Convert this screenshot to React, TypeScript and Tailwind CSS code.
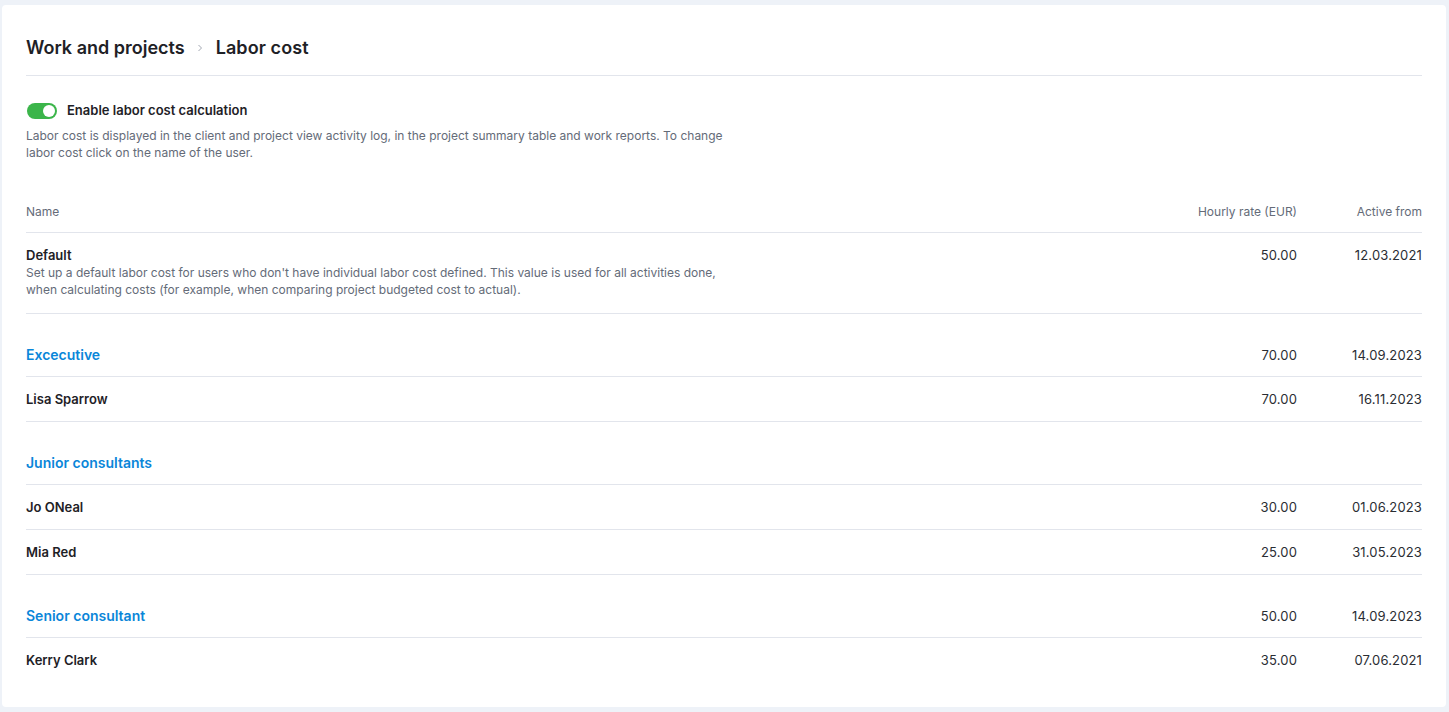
const groups = [
  {
    name: 'Excecutive',
    rate: '70.00',
    from: '14.09.2023',
    people: [{ name: 'Lisa Sparrow', rate: '70.00', from: '16.11.2023' }],
  },
  {
    name: 'Junior consultants',
    rate: '',
    from: '',
    people: [
      { name: 'Jo ONeal', rate: '30.00', from: '01.06.2023' },
      { name: 'Mia Red', rate: '25.00', from: '31.05.2023' },
    ],
  },
  {
    name: 'Senior consultant',
    rate: '50.00',
    from: '14.09.2023',
    people: [{ name: 'Kerry Clark', rate: '35.00', from: '07.06.2021' }],
  },
];

function Toggle() {
  return (
    <div className="relative h-4 w-[30px] rounded-full bg-[#3bb54a]">
      <div className="absolute right-[2px] top-[2px] h-3 w-3 rounded-full bg-white" />
    </div>
  );
}

function Cells({ rate, from }: { rate: string; from: string }) {
  return (
    <>
      <div className="w-[200px] text-right text-[13px] tracking-[0.15px] text-[#2a2d33]">{rate}</div>
      <div className="w-[125px] text-right text-[13px] tracking-[0.15px] text-[#2a2d33]">{from}</div>
    </>
  );
}

export default function App() {
  return (
    <div
      className="min-h-[712px] bg-[#eef2f8] pl-[2px] pr-[3px] pt-[5px] pb-[6px]"
      style={{ fontFamily: 'Inter, "Noto Sans", sans-serif' }}
    >
      <div className="rounded-[4px] bg-white px-6 pt-[31px] pb-6">
        {/* Breadcrumb */}
        <div className="flex items-center border-b border-[#e2e5ec] pb-[15px] leading-6">
          <span className="text-[18px] font-semibold text-[#1e2126]">Work and projects</span>
          <svg className="ml-[12px] mr-[13px] h-[8px] w-[6px]" viewBox="0 0 6 8" fill="none">
            <path d="M1.5 1l3 3-3 3" stroke="#a3a8b3" strokeWidth="1" />
          </svg>
          <span className="text-[18px] font-semibold tracking-[0.1px] text-[#1e2126]">Labor cost</span>
        </div>

        {/* Toggle */}
        <div className="mt-[25px] flex h-5 items-center gap-[10px] pl-[1px]">
          <Toggle />
          <span className="text-[13px] font-semibold text-[#1e2126]">Enable labor cost calculation</span>
        </div>
        <p className="mt-[6px] max-w-[720px] text-[12px] leading-[17px] text-[#646b78]">
          Labor cost is displayed in the client and project view activity log, in the project summary table and work reports. To change
          labor cost click on the name of the user.
        </p>

        {/* Table header */}
        <div className="mt-[43px] flex items-center border-b border-[#e2e5ec] pb-[12px] leading-4">
          <div className="flex-1 text-[12px] text-[#646b78]">Name</div>
          <div className="w-[200px] text-right text-[12px] text-[#646b78]">Hourly rate (EUR)</div>
          <div className="w-[125px] text-right text-[12px] text-[#646b78]">Active from</div>
        </div>

        {/* Default row */}
        <div className="flex items-start border-b border-[#e2e5ec] pt-[14px] pb-[15px]">
          <div className="flex-1">
            <div className="text-[13px] font-semibold leading-[17px] text-[#1e2126]">Default</div>
            <p className="max-w-[700px] text-[12px] leading-[17px] text-[#646b78]">
              Set up a default labor cost for users who don't have individual labor cost defined. This value is used for all activities done,
              when calculating costs (for example, when comparing project budgeted cost to actual).
            </p>
          </div>
          <div className="flex leading-[17px]">
            <Cells rate="50.00" from="12.03.2021" />
          </div>
        </div>

        {groups.map((g, gi) => (
          <div key={g.name}>
            <div className="flex items-center border-b border-[#e2e5ec] pt-[31px] pb-[11px] leading-5">
              <div className="flex-1 text-[14px] font-semibold text-[#0a86d9]">{g.name}</div>
              <Cells rate={g.rate} from={g.from} />
            </div>
            {g.people.map((p, pi) => {
              const last = gi === groups.length - 1 && pi === g.people.length - 1;
              return (
                <div
                  key={p.name}
                  className={`flex h-[45px] items-center leading-[17px] ${last ? '' : 'border-b border-[#e2e5ec]'}`}
                >
                  <div className="flex-1 text-[13px] font-semibold text-[#1e2126]">{p.name}</div>
                  <Cells rate={p.rate} from={p.from} />
                </div>
              );
            })}
          </div>
        ))}
      </div>
    </div>
  );
}
